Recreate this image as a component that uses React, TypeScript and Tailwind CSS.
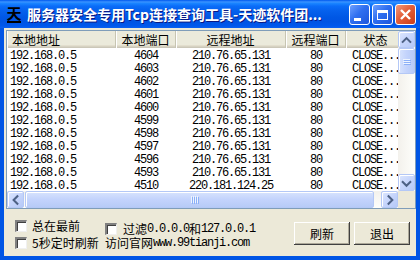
import React from 'react';

const cjk = "font-['SimSun','Noto_Sans_CJK_SC',sans-serif]";
const mono = "font-['Liberation_Mono',monospace] text-[12px] tracking-[-1.2px]";

const rows: string[][] = [
    ['192.168.0.5', '4604', '210.76.65.131', '80', 'CLOSE...'],
    ['192.168.0.5', '4603', '210.76.65.131', '80', 'CLOSE...'],
    ['192.168.0.5', '4602', '210.76.65.131', '80', 'CLOSE...'],
    ['192.168.0.5', '4601', '210.76.65.131', '80', 'CLOSE...'],
    ['192.168.0.5', '4600', '210.76.65.131', '80', 'CLOSE...'],
    ['192.168.0.5', '4599', '210.76.65.131', '80', 'CLOSE...'],
    ['192.168.0.5', '4598', '210.76.65.131', '80', 'CLOSE...'],
    ['192.168.0.5', '4597', '210.76.65.131', '80', 'CLOSE...'],
    ['192.168.0.5', '4596', '210.76.65.131', '80', 'CLOSE...'],
    ['192.168.0.5', '4593', '210.76.65.131', '80', 'CLOSE...'],
    ['192.168.0.5', '4510', '220.181.124.25', '80', 'CLOSE...'],
];

// column widths, written out in full
const colW = ['w-[109px]', 'w-[60px]', 'w-[110px]', 'w-[60px]', 'w-[60px]'];
const headers = ['本地地址', '本地端口', '远程地址', '远程端口', '状态'];

function Chevron({ dir }: { dir: 'up' | 'down' | 'left' | 'right' }) {
    const d = {
        up: 'M4 10 L8 6 L12 10',
        down: 'M4 7 L8 11 L12 7',
        left: 'M10 4 L6 8 L10 12',
        right: 'M7 4 L11 8 L7 12',
    }[dir];
    return (
        <svg width="16" height="16" viewBox="0 0 16 16">
            <path d={d} fill="none" stroke="#4d6185" strokeWidth="2.2" strokeLinecap="square" />
        </svg>
    );
}

function ArrowBtn({ dir }: { dir: 'up' | 'down' | 'left' | 'right' }) {
    return (
        <div className="w-[17px] h-[17px] shrink-0 flex items-center justify-center rounded-[2px] border border-[#b4c8f6] bg-[linear-gradient(135deg,#dde7fe_0%,#c6d5fc_50%,#b5c9f7_100%)] shadow-[inset_1px_1px_#fff]">
            <Chevron dir={dir} />
        </div>
    );
}

function Checkbox() {
    return (
        <div className="w-[12px] h-[12px] shrink-0 bg-white border-t-2 border-l-2 border-t-[#808080] border-l-[#808080] border-b border-r border-b-[#f0f0f0] border-r-[#f0f0f0] shadow-[inset_1px_1px_#404040]" />
    );
}

function WinBtn({ kind }: { kind: 'min' | 'max' | 'close' }) {
    const bg = kind === 'close'
        ? 'bg-[linear-gradient(135deg,#f19a7d_0%,#e35f3a_45%,#cc3d16_100%)]'
        : 'bg-[linear-gradient(135deg,#6ea0ff_0%,#2f6ff0_45%,#1c55dc_100%)]';
    return (
        <div className={`w-[21px] h-[21px] rounded-[3px] border border-white flex items-center justify-center ${bg}`}>
            {kind === 'min' && <div className="w-[7px] h-[3px] bg-white mt-[9px] mr-[5px]" />}
            {kind === 'max' && <div className="w-[11px] h-[10px] border border-white border-t-[3px]" />}
            {kind === 'close' && (
                <svg width="13" height="13" viewBox="0 0 13 13">
                    <path d="M2 2 L11 11 M11 2 L2 11" stroke="#fff" strokeWidth="2.4" />
                </svg>
            )}
        </div>
    );
}

function XpButton({ label }: { label: string }) {
    return (
        <div className={`w-[56px] h-[23px] flex items-center justify-center bg-[#ece9d8] text-[12px] text-black ${cjk} shadow-[inset_-1px_-1px_#404040,inset_1px_1px_#fff,inset_-2px_-2px_#aca899]`}>
            {label}
        </div>
    );
}

export default function App() {
    return (
        <div className="w-[420px] h-[260px] bg-[#0055e5] flex flex-col overflow-hidden">
            {/* Title bar */}
            <div className="h-[28px] shrink-0 flex items-center pl-[6px] pr-[4px] bg-[linear-gradient(180deg,#0058ee_0%,#3a93ff_7%,#1a84ff_12%,#0a6cf8_22%,#0560ec_40%,#0057e5_62%,#0054e3_78%,#0058ec_92%,#0a60f0_100%)]">
                <div className="w-[16px] h-[18px] flex flex-col items-center justify-start">
                    <span className="text-[15px] leading-[15px] font-bold text-black font-['Noto_Sans_CJK_SC',serif]">天</span>
                    <div className="w-[14px] h-[2px] bg-black mt-[1px]" />
                </div>
                <div className={`ml-[5px] text-white font-bold text-[14px] leading-none whitespace-nowrap [text-shadow:1px_1px_#0a1883] ${cjk}`}>
                    服务器安全专用Tcp连接查询工具-天迹软件团...
                </div>
                <div className="ml-auto flex gap-[2px] mt-[1px]">
                    <WinBtn kind="min" />
                    <WinBtn kind="max" />
                    <WinBtn kind="close" />
                </div>
            </div>

            {/* Client area */}
            <div className="flex-1 mx-[4px] mb-[4px] bg-[#ece9d8] flex flex-col pt-[2px] pl-[2px]">
                {/* List view */}
                <div className="h-[179px] border border-[#7f9db9] bg-white flex">
                    <div className="w-[391px] flex flex-col">
                        <div className="flex-1 flex flex-col overflow-hidden">
                            {/* Header */}
                            <div className="h-[17px] shrink-0 flex bg-[#ebeadb] shadow-[inset_0_-1px_#cbc7b8,inset_0_-2px_#d6d2c2,inset_0_-3px_#e2decd]">
                                {headers.map((h, i) => (
                                    <div
                                        key={h}
                                        className={`${colW[i]} shrink-0 h-full flex items-center text-[12px] leading-none text-black ${cjk} ${i === 0 ? 'pl-[5px]' : 'justify-center'} border-r border-r-[#c7c5b2] shadow-[inset_1px_0_#fff]`}
                                    >
                                        {h}
                                    </div>
                                ))}
                            </div>
                            {/* Rows */}
                            <div className="flex flex-col pt-[1px]">
                                {rows.map((r, ri) => (
                                    <div key={ri} className="h-[13px] shrink-0 flex text-black">
                                        {r.map((c, ci) => (
                                            <div
                                                key={ci}
                                                className={`${colW[ci]} shrink-0 h-[13px] leading-[14px] whitespace-nowrap overflow-hidden ${mono} ${ci === 0 ? 'pl-[3px]' : 'text-center'}`}
                                            >
                                                {c}
                                            </div>
                                        ))}
                                    </div>
                                ))}
                            </div>
                        </div>
                        {/* Horizontal scrollbar */}
                        <div className="h-[17px] shrink-0 flex bg-[linear-gradient(180deg,#f3f1ec_0%,#fefefb_100%)]">
                            <ArrowBtn dir="left" />
                            <div className="flex-1 flex pl-[1px] pr-[7px]">
                                <div className="flex-1 rounded-[2px] border border-[#b4c8f6] bg-[linear-gradient(180deg,#d7e3fd_0%,#c3d3fc_50%,#b7cbf7_100%)] shadow-[inset_1px_1px_#fff] flex items-center justify-center">
                                    <div className="flex gap-[1px] mr-[10px]">
                                        <div className="w-[1px] h-[7px] bg-[#eef4fe] shadow-[1px_1px_#8cb0f8]" />
                                        <div className="w-[1px] h-[7px] bg-[#eef4fe] shadow-[1px_1px_#8cb0f8]" />
                                        <div className="w-[1px] h-[7px] bg-[#eef4fe] shadow-[1px_1px_#8cb0f8]" />
                                        <div className="w-[1px] h-[7px] bg-[#eef4fe] shadow-[1px_1px_#8cb0f8]" />
                                    </div>
                                </div>
                            </div>
                            <ArrowBtn dir="right" />
                        </div>
                    </div>
                    {/* Vertical scrollbar */}
                    <div className="w-[17px] flex flex-col">
                        <div className="flex-1 flex flex-col bg-[linear-gradient(90deg,#f3f1ec_0%,#fefefb_100%)]">
                            <ArrowBtn dir="up" />
                            <div className="h-[26px] rounded-[2px] border border-[#b4c8f6] bg-[linear-gradient(90deg,#d7e3fd_0%,#c3d3fc_50%,#b7cbf7_100%)] shadow-[inset_1px_1px_#fff] flex flex-col items-center justify-center gap-[1px]">
                                <div className="w-[7px] h-[1px] bg-[#eef4fe] shadow-[1px_1px_#8cb0f8]" />
                                <div className="w-[7px] h-[1px] bg-[#eef4fe] shadow-[1px_1px_#8cb0f8]" />
                                <div className="w-[7px] h-[1px] bg-[#eef4fe] shadow-[1px_1px_#8cb0f8]" />
                            </div>
                            <div className="flex-1" />
                            <ArrowBtn dir="down" />
                        </div>
                        <div className="h-[17px] bg-[#ece9d8]" />
                    </div>
                </div>

                {/* Bottom controls */}
                <div className={`flex-1 flex text-[12px] leading-none text-black ${cjk}`}>
                    <div className="w-[99px] pl-[9px] pt-[11px] flex flex-col gap-[5px]">
                        <div className="flex items-center gap-[5px]">
                            <Checkbox />
                            <span>总在最前</span>
                        </div>
                        <div className="flex items-center gap-[5px]">
                            <Checkbox />
                            <span>5秒定时刷新</span>
                        </div>
                    </div>
                    <div className="pt-[14px] flex flex-col">
                        <div className="flex items-center gap-[6px]">
                            <Checkbox />
                            <span className="flex items-center">
                                过滤<span className={mono}>0.0.0.0</span>和<span className={mono}>127.0.0.1</span>
                            </span>
                        </div>
                        <div className="flex items-center mt-[2px]">
                            访问官网<span className={mono}>www.99tianji.com</span>
                        </div>
                    </div>
                    <div className="ml-auto mr-[6px] mt-[13px] flex gap-[4px]">
                        <XpButton label="刷新" />
                        <XpButton label="退出" />
                    </div>
                </div>
            </div>
        </div>
    );
}
